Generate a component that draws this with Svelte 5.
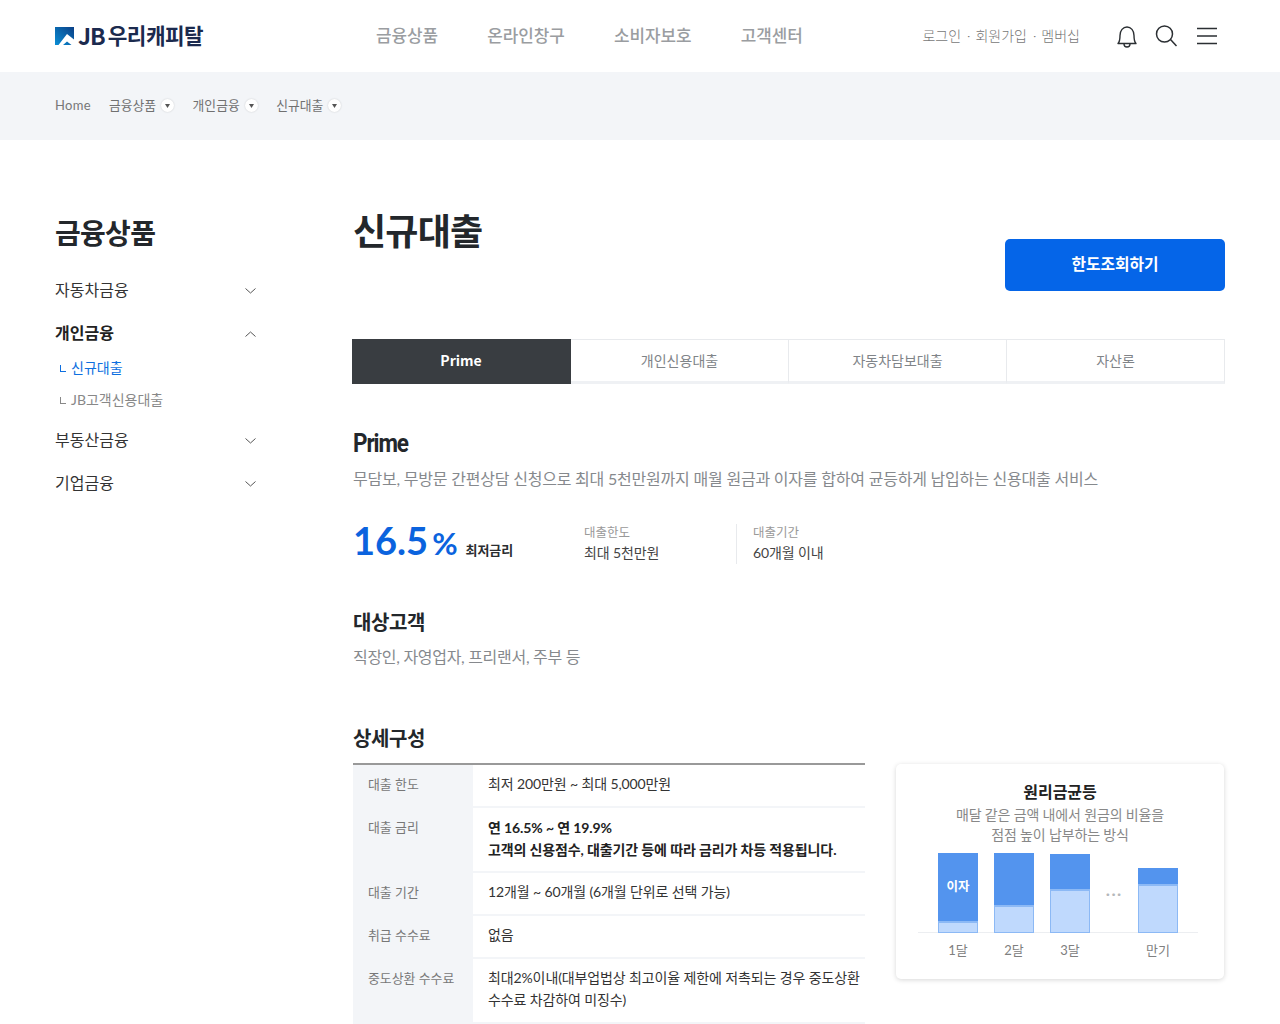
<script>
  const gnb = ['금융상품', '온라인창구', '소비자보호', '고객센터'];
  const crumbs = ['금융상품', '개인금융', '신규대출'];
  const tabs = ['Prime', '개인신용대출', '자동차담보대출', '자산론'];
  const bars = [
    { label: '1달', top: 68, bottom: 12, text: '이자' },
    { label: '2달', top: 52, bottom: 28 },
    { label: '3달', top: 35, bottom: 44 }
  ];
</script>

<div class="page">
  <header class="header">
    <div class="logo">
      <svg class="mark" viewBox="0 0 19 18" width="19" height="18">
        <defs>
          <linearGradient id="lg" x1="1" y1="0" x2="0" y2="1">
            <stop offset="0" stop-color="#0a3f86" />
            <stop offset="1" stop-color="#0a8fd6" />
          </linearGradient>
        </defs>
        <rect width="19" height="18" fill="url(#lg)" />
        <path d="M3.5 18 L12 7 L19 12.5 V18 H16.5 L12 14.5 L8 18 Z" fill="#fff" />
      </svg>
      <span class="logo-text">JB</span><span class="logo-ko">우리캐피탈</span>
    </div>
    <nav class="gnb">
      {#each gnb as g}<span>{g}</span>{/each}
    </nav>
    <div class="util">
      <div class="links"><span>로그인</span><i>·</i><span>회원가입</span><i>·</i><span>멤버십</span></div>
      <svg class="ic" width="24" height="26" viewBox="0 0 24 26" fill="none" stroke="#2b2f33" stroke-width="1.4">
        <path d="M3 20.5 C5 18.5 5 17 5 12.5 C5 7.5 8 4 12 4 C16 4 19 7.5 19 12.5 C19 17 19 18.5 21 20.5 Z" stroke-linejoin="round" />
        <path d="M9 21 C9 25 15 25 15 21" />
      </svg>
      <svg class="ic" width="24" height="24" viewBox="0 0 24 24" fill="none" stroke="#2b2f33" stroke-width="1.5">
        <circle cx="10.5" cy="10" r="8" />
        <path d="M16.5 15.5 L22.5 22" />
      </svg>
      <svg class="ic" width="20" height="18" viewBox="0 0 20 18" stroke="#2b2f33" stroke-width="1.6">
        <path d="M0 1.5 H20 M0 9 H20 M0 16.5 H20" />
      </svg>
    </div>
  </header>

  <div class="crumb">
    <span class="home">Home</span>
    {#each crumbs as c}
      <span class="crumb-item">{c}<b class="dot"><svg width="5" height="4" viewBox="0 0 5 4"><path d="M0 0 H5 L2.5 4 Z" fill="#555" /></svg></b></span>
    {/each}
  </div>

  <div class="body">
    <aside class="side">
      <h2>금융상품</h2>
      <ul class="menu">
        <li class="m first"><span>자동차금융</span><svg width="11" height="6" viewBox="0 0 11 6" fill="none" stroke="#555" stroke-width="1"><path d="M.5 .5 L5.5 5 L10.5 .5" /></svg></li>
        <li class="m on"><span>개인금융</span><svg width="11" height="6" viewBox="0 0 11 6" fill="none" stroke="#555" stroke-width="1"><path d="M.5 5.5 L5.5 1 L10.5 5.5" /></svg></li>
        <li class="sub cur"><span class="elbow"></span>신규대출</li>
        <li class="sub"><span class="elbow"></span>JB고객신용대출</li>
        <li class="m after"><span>부동산금융</span><svg width="11" height="6" viewBox="0 0 11 6" fill="none" stroke="#555" stroke-width="1"><path d="M.5 .5 L5.5 5 L10.5 .5" /></svg></li>
        <li class="m"><span>기업금융</span><svg width="11" height="6" viewBox="0 0 11 6" fill="none" stroke="#555" stroke-width="1"><path d="M.5 .5 L5.5 5 L10.5 .5" /></svg></li>
      </ul>
    </aside>

    <main class="main">
      <div class="title-row">
        <h1>신규대출</h1>
        <button class="cta">한도조회하기</button>
      </div>

      <div class="tabs">
        {#each tabs as t, i}<div class="tab" class:active={i === 0}>{t}</div>{/each}
      </div>

      <h3 class="prime">Prime</h3>
      <p class="desc">무담보, 무방문 간편상담 신청으로 최대 5천만원까지 매월 원금과 이자를 합하여 균등하게 납입하는 신용대출 서비스</p>

      <div class="stats">
        <div class="rate"><strong>16.5</strong><em>%</em><span>최저금리</span></div>
        <div class="stat s1"><small>대출한도</small><span>최대 5천만원</span></div>
        <div class="stat s2"><small>대출기간</small><span>60개월 이내</span></div>
      </div>

      <h3 class="h-target">대상고객</h3>
      <p class="desc target">직장인, 자영업자, 프리랜서, 주부 등</p>

      <h3 class="h-detail">상세구성</h3>
      <div class="detail">
        <div class="table">
          <div class="row r1"><div class="th">대출 한도</div><div class="td">최저 200만원 ~ 최대 5,000만원</div></div>
          <div class="row r2"><div class="th">대출 금리</div><div class="td strong">연 16.5% ~ 연 19.9%<br />고객의 신용점수, 대출기간 등에 따라 금리가 차등 적용됩니다.</div></div>
          <div class="row r1"><div class="th">대출 기간</div><div class="td">12개월 ~ 60개월 (6개월 단위로 선택 가능)</div></div>
          <div class="row r1"><div class="th">취급 수수료</div><div class="td">없음</div></div>
          <div class="row r2"><div class="th">중도상환 수수료</div><div class="td">최대2%이내(대부업법상 최고이율 제한에 저촉되는 경우 중도상환 수수료 차감하여 미징수)</div></div>
        </div>

        <div class="card">
          <h4>원리금균등</h4>
          <p>매달 같은 금액 내에서 원금의 비율을<br />점점 높이 납부하는 방식</p>
          <div class="chart">
            {#each bars as b}
              <div class="col">
                <div class="bar">
                  <div class="b-top" style="height:{b.top}px">{b.text ?? ''}</div>
                  <div class="b-bot" style="height:{b.bottom}px"></div>
                </div>
                <div class="lab">{b.label}</div>
              </div>
            {/each}
            <div class="col gap">
              <div class="bar dots">···</div>
              <div class="lab"></div>
            </div>
            <div class="col">
              <div class="bar">
                <div class="b-top" style="height:16px"></div>
                <div class="b-bot" style="height:49px"></div>
              </div>
              <div class="lab">만기</div>
            </div>
          </div>
        </div>
      </div>
    </main>
  </div>
</div>

<style>
  :global(body) {
    margin: 0;
    background: #fff;
    font-family: Lato, "Noto Sans CJK KR", sans-serif;
    color: #222;
  }
  .page { width: 1280px; height: 1024px; overflow: hidden; }
  .header {
    height: 72px;
    display: flex;
    align-items: center;
    padding: 0 63px 0 55px;
    box-sizing: border-box;
    position: relative;
  }
  .logo { display: flex; align-items: center; width: 321px; flex: none; color: #1b2a4e; }
  .mark { margin-right: 4px; }
  .logo-text { font: 700 23px/1 "Noto Sans CJK KR", sans-serif; letter-spacing: -1px; margin: -2px 3px 0 0; }
  .logo-ko { font: 700 21.3px/1 "Noto Sans CJK KR", sans-serif; letter-spacing: -.5px; margin-top: -2px; }
  .gnb { display: flex; flex: none; gap: 49.3px; font-size: 16.9px; font-weight: 500; color: #9a9da1; white-space: nowrap; margin-top: -3px; letter-spacing: -.05px; }
  .util { display: flex; align-items: center; margin-left: auto; }
  .links { display: flex; align-items: center; font-size: 14px; color: #777; margin-right: 36px; font-weight: 300; white-space: nowrap; margin-top: -2px; margin-left: -1px; }
  .links i { font-style: normal; margin: 0 5px 0 6px; }
  .ic { display: block; flex: none; }
  .ic:nth-of-type(1) { margin-right: 15px; margin-left: -1px; }
  .ic:nth-of-type(2) { margin-right: 19px; }
  .crumb {
    height: 68px;
    background: #f3f5f8;
    display: flex;
    align-items: center;
    padding-left: 55px;
    font-size: 12.8px;
    color: #707070;
  }
  .home { width: 54px; font-size: 13px; letter-spacing: .3px; margin-top: -2px; font-weight: 400; color: #777; }
  .crumb-item { display: flex; align-items: center; margin-right: 18.5px; margin-top: -4px; }
  .dot {
    width: 13px; height: 13px; border-radius: 50%; background: #fff; box-shadow: 0 0 2px rgba(0, 0, 0, .18);
    display: flex; align-items: center; justify-content: center; margin: 3px 0 0 5px;
  }
  .body { display: flex; padding: 0 55px; }
  .side { width: 201px; flex: none; margin-right: 97px; padding-top: 76px; }
  .side h2 { margin: 0 0 28px; font-size: 28px; line-height: 34px; font-weight: 700; letter-spacing: -.7px; color: #23272b; }
  .menu { list-style: none; margin: 0; padding: 0; }
  .m { display: flex; justify-content: space-between; align-items: center; font-size: 16px; line-height: 24px; color: #333; margin-bottom: 19px; }
  .m svg { margin-top: 2px; }
  .m.on { font-weight: 700; margin-bottom: 13px; color: #222; }
  .m.after { margin-top: 18px; }
  .sub { font-size: 14px; line-height: 20px; color: #888; margin: 0 0 12px 5px; display: flex; align-items: center; font-weight: 400; }
  .sub.cur { color: #0d6fe0; }
  .elbow { width: 5px; height: 6px; border-left: 1px solid currentColor; border-bottom: 1px solid currentColor; margin-right: 5px; }
  .main { width: 872px; padding-top: 66px; }
  .title-row { display: flex; justify-content: space-between; height: 133px; }
  h1 { margin: 1px 0 0; font-size: 36px; line-height: 48px; font-weight: 700; letter-spacing: -.8px; color: #23272b; }
  .cta {
    width: 220px; height: 52px; margin-top: 33px; border: 0; border-radius: 5px; padding: 0 0 4px;
    background: #0565e8; color: #fff; font: 700 15.8px "Noto Sans CJK KR", sans-serif;
  }
  .tabs { display: flex; height: 45px; box-sizing: border-box; margin-left: -1px; }
  .tab {
    flex: 1; display: flex; align-items: center; justify-content: center; padding-bottom: 2px;
    border-top: 1px solid #e8eaed; border-right: 1px solid #e8eaed; border-bottom: 3px solid #eff1f4;
    font-size: 14px; color: #808488; box-sizing: border-box; font-weight: 400;
  }
  .tab.active { flex: none; width: 219px; background: #393d41; color: #fff; font: 700 14px "Noto Sans CJK KR", sans-serif; border-color: #393d41; }
  .prime { margin: 44px 0 0; font: 700 25px/32px Roboto, sans-serif; color: #23272b; letter-spacing: -1.2px; transform: scaleX(.9); transform-origin: left center; }
  .desc { margin: 7px 0 0; font-size: 16px; line-height: 24px; color: #86898d; font-weight: 400; letter-spacing: -.21px; }
  .stats { display: flex; align-items: flex-start; margin-top: 27px; height: 42px; }
  .rate { display: flex; align-items: baseline; width: 231px; flex: none; color: #0b63de; }
  .rate strong { font-size: 38px; line-height: 44px; font-weight: 700; }
  .rate em { font-style: normal; font-size: 31px; font-weight: 700; margin-left: 4px; }
  .rate span { font-size: 13px; font-weight: 700; color: #2a2d30; margin: 0 0 2px 8px; letter-spacing: -.1px; }
  .stat { display: flex; flex-direction: column; font-size: 14px; line-height: 22px; color: #444; margin-top: 6px; letter-spacing: -.1px; }
  .stat small { font-size: 12.5px; color: #999; line-height: 18px; font-weight: 400; letter-spacing: 0; }
  .s1 { width: 152px; flex: none; }
  .s2 { border-left: 1px solid #e8eaed; padding-left: 16px; }
  .h-target { margin: 47px 0 0; font-size: 20px; line-height: 30px; font-weight: 700; color: #23272b; letter-spacing: -.4px; }
  .target { margin-top: 8px; letter-spacing: -.3px; }
  .h-detail { margin: 54px 0 0; font-size: 20px; line-height: 30px; font-weight: 700; color: #23272b; letter-spacing: -.4px; }
  .detail { display: flex; justify-content: space-between; margin-top: 10px; padding-right: 1px; }
  .table { width: 512px; border-top: 2px solid #999; background: #f3f5f8; flex: none; }
  .row { display: flex; }
  .r1 .td { height: 43px; }
  .th { width: 120px; flex: none; box-sizing: border-box; padding: 9px 0 0 15px; font-size: 12.9px; line-height: 20px; color: #777; font-weight: 400; }
  .td {
    flex: 1; background: #fff; padding: 8px 0 10px 15px; font-size: 14px; line-height: 22px;
    border-bottom: 2px solid #f3f5f8; box-sizing: border-box; color: #333; letter-spacing: -.12px;
  }
  .td.strong { font-weight: 700; color: #222; height: 65px; padding-top: 9px; }
  .r2 .td { height: 65px; }
  .card {
    width: 328px; height: 215px; margin-top: 1px; box-sizing: border-box; border-radius: 5px; flex: none;
    background: #fff; box-shadow: 0 1px 5px rgba(0, 0, 0, .16); padding-top: 17px; text-align: center;
  }
  .card h4 { margin: 0; font-size: 16px; line-height: 22px; font-weight: 700; color: #222; }
  .card p { margin: 2px 0 0; font-size: 14px; line-height: 19.5px; color: #888; font-weight: 400; letter-spacing: -.15px; }
  .chart {
    display: flex; margin: 9px 26px 0 22px; padding-left: 20px;
    background: linear-gradient(#eceef1, #eceef1) no-repeat 0 79px / 100% 1px;
  }
  .col { width: 40px; margin-right: 16px; flex: none; }
  .col.gap { width: 16px; margin-right: 16px; }
  .bar { height: 80px; display: flex; flex-direction: column; justify-content: flex-end; }
  .b-top {
    background: #5394ee; border: 0; color: #fff; font-size: 12.5px; font-weight: 700;
    display: flex; align-items: center; justify-content: center; padding-bottom: 4px; box-sizing: border-box;
  }
  .b-bot { background: #bfd9fd; border: 1px solid #8cb9f5; border-top: 2px solid #8cb9f5; box-sizing: border-box; }
  .dots { justify-content: center; align-items: center; color: #b5b8bb; font-size: 18px; line-height: 1; letter-spacing: 1px; white-space: nowrap; }
  .lab { margin-top: 7px; font-size: 13px; line-height: 20px; color: #808080; font-weight: 400; }
</style>
